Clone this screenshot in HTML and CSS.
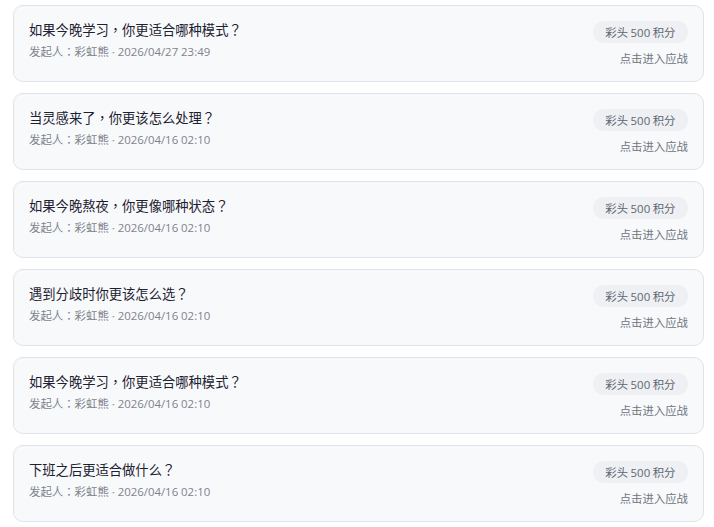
FILE: index.html
```html
<!DOCTYPE html>
<html lang="zh-CN">
<head>
<meta charset="utf-8">
<link rel="stylesheet" href="styles.css">
</head>
<body>
<div class="list">
  <div class="card">
    <div class="info">
      <div class="title">如果今晚学习<span class="p" lang="zh-TW">，</span>你更适合哪种模式<span class="p" lang="zh-TW">？</span></div>
      <div class="meta">发起人<span class="p" lang="zh-TW">：</span>彩虹熊<span class="time"> · 2026/04/27 23:49</span></div>
    </div>
    <div class="side">
      <span class="badge">彩头 <span class="num">500</span> 积分</span>
      <span class="enter">点击进入应战</span>
    </div>
  </div>
  <div class="card">
    <div class="info">
      <div class="title">当灵感来了<span class="p" lang="zh-TW">，</span>你更该怎么处理<span class="p" lang="zh-TW">？</span></div>
      <div class="meta">发起人<span class="p" lang="zh-TW">：</span>彩虹熊<span class="time"> · 2026/04/16 02:10</span></div>
    </div>
    <div class="side">
      <span class="badge">彩头 <span class="num">500</span> 积分</span>
      <span class="enter">点击进入应战</span>
    </div>
  </div>
  <div class="card">
    <div class="info">
      <div class="title">如果今晚熬夜<span class="p" lang="zh-TW">，</span>你更像哪种状态<span class="p" lang="zh-TW">？</span></div>
      <div class="meta">发起人<span class="p" lang="zh-TW">：</span>彩虹熊<span class="time"> · 2026/04/16 02:10</span></div>
    </div>
    <div class="side">
      <span class="badge">彩头 <span class="num">500</span> 积分</span>
      <span class="enter">点击进入应战</span>
    </div>
  </div>
  <div class="card">
    <div class="info">
      <div class="title">遇到分歧时你更该怎么选<span class="p" lang="zh-TW">？</span></div>
      <div class="meta">发起人<span class="p" lang="zh-TW">：</span>彩虹熊<span class="time"> · 2026/04/16 02:10</span></div>
    </div>
    <div class="side">
      <span class="badge">彩头 <span class="num">500</span> 积分</span>
      <span class="enter">点击进入应战</span>
    </div>
  </div>
  <div class="card">
    <div class="info">
      <div class="title">如果今晚学习<span class="p" lang="zh-TW">，</span>你更适合哪种模式<span class="p" lang="zh-TW">？</span></div>
      <div class="meta">发起人<span class="p" lang="zh-TW">：</span>彩虹熊<span class="time"> · 2026/04/16 02:10</span></div>
    </div>
    <div class="side">
      <span class="badge">彩头 <span class="num">500</span> 积分</span>
      <span class="enter">点击进入应战</span>
    </div>
  </div>
  <div class="card">
    <div class="info">
      <div class="title">下班之后更适合做什么<span class="p" lang="zh-TW">？</span></div>
      <div class="meta">发起人<span class="p" lang="zh-TW">：</span>彩虹熊<span class="time"> · 2026/04/16 02:10</span></div>
    </div>
    <div class="side">
      <span class="badge">彩头 <span class="num">500</span> 积分</span>
      <span class="enter">点击进入应战</span>
    </div>
  </div>
</div>
</body>
</html>
```
FILE: styles.css
```css
html, body {
  margin: 0;
  padding: 0;
  background: #ffffff;
}
body {
  font-family: "Noto Sans CJK SC", "Noto Sans", sans-serif;
}
.list {
  display: flex;
  flex-direction: column;
  gap: 11px;
  padding: 5px 10px 0 13px;
}
.card {
  display: flex;
  justify-content: space-between;
  align-items: flex-start;
  height: 77px;
  box-sizing: border-box;
  border: 1px solid #dfe3ea;
  border-radius: 10px;
  background: #f8f9fb;
  padding: 15px 15px 0 15px;
}
.info {
  display: flex;
  flex-direction: column;
}
.title {
  font-size: 13.3px;
  line-height: 17px;
  color: #1c2130;
}
.p {
  font-family: "Noto Sans CJK TC", "Noto Sans CJK SC", sans-serif;
}
.meta {
  margin-top: 4px;
  font-size: 11.4px;
  line-height: 18px;
  color: #7d838d;
}
.time,
.num {
  font-family: "Open Sans", "Noto Sans", sans-serif;
}
.side {
  display: flex;
  flex-direction: column;
  align-items: flex-end;
}
.badge {
  display: inline-flex;
  align-items: center;
  white-space: pre;
  height: 22px;
  padding: 0 12.5px;
  border-radius: 11px;
  background: #eef0f3;
  font-size: 11.4px;
  color: #5e6571;
}
.enter {
  margin-top: 6px;
  font-size: 11.4px;
  line-height: 18px;
  color: #6f7580;
}
```
